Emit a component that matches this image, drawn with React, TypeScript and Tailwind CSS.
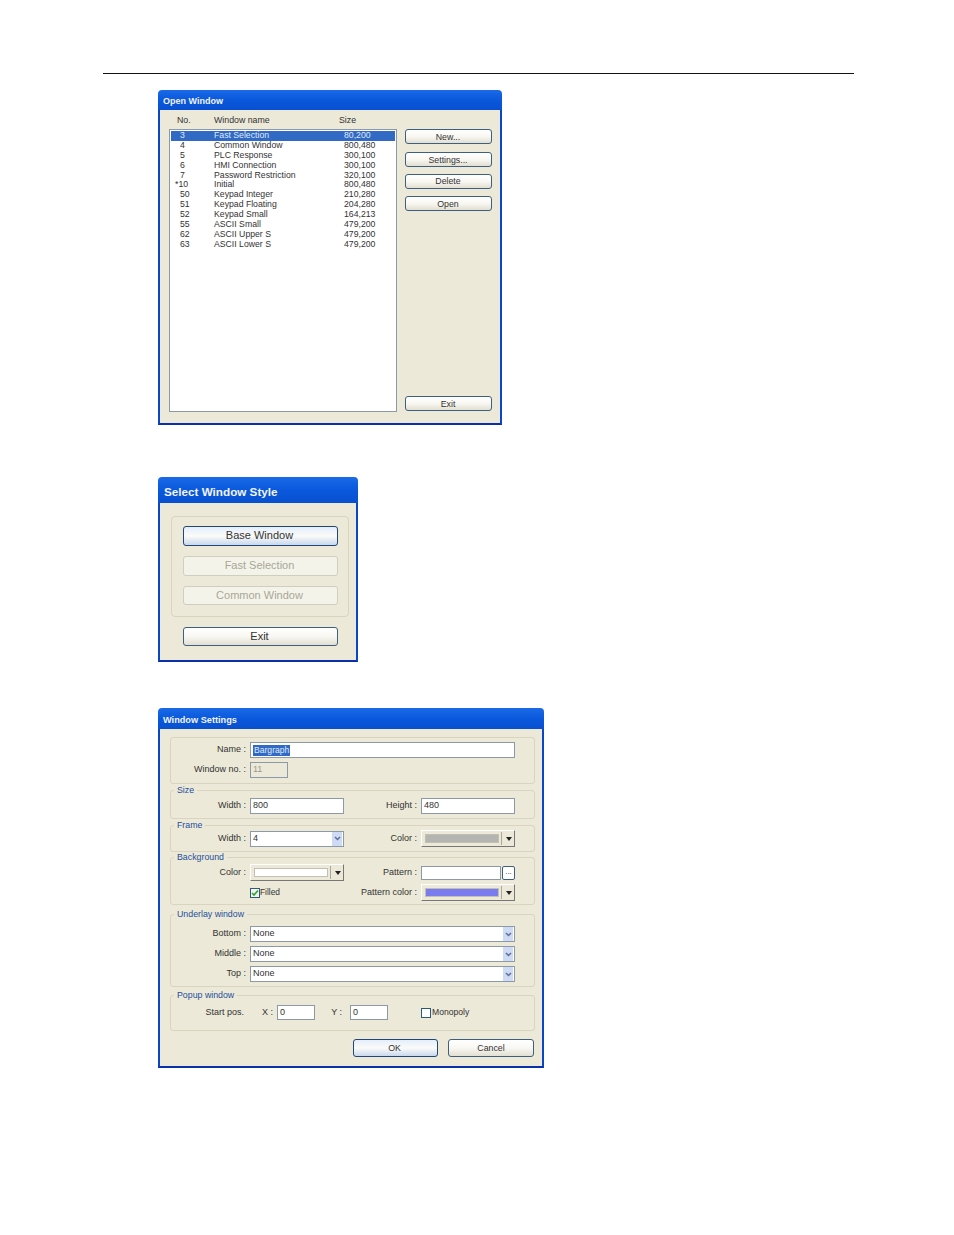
import type { ReactNode } from "react";

const rows = [
  ["3", "Fast Selection", "80,200"],
  ["4", "Common Window", "800,480"],
  ["5", "PLC Response", "300,100"],
  ["6", "HMI Connection", "300,100"],
  ["7", "Password Restriction", "320,100"],
  ["*10", "Initial", "800,480"],
  ["50", "Keypad Integer", "210,280"],
  ["51", "Keypad Floating", "204,280"],
  ["52", "Keypad Small", "164,213"],
  ["55", "ASCII Small", "479,200"],
  ["62", "ASCII Upper S", "479,200"],
  ["63", "ASCII Lower S", "479,200"],
];

function Win({ title, className, barClass, children }: { title: string; className: string; barClass: string; children: ReactNode }) {
  return (
    <div className={`ml-[158px] flex flex-col ${className}`}>
      <div className={`flex items-center rounded-t-[4px] bg-gradient-to-b from-[#1a6ae8] via-[#0a58dc] to-[#0850d0] font-bold text-[#f2f4f8] ${barClass}`}>
        {title}
      </div>
      <div className="min-h-0 flex-1 border-x-2 border-b-2 border-x-[#0a46c8] border-b-[#0a2fa8] bg-[#ece9d8]">{children}</div>
    </div>
  );
}

function Btn({ label, className, kind }: { label: string; className: string; kind?: "default" | "off" }) {
  const look =
    kind === "off"
      ? "border-[#d0cebf] bg-[#f4f3ea] text-[#a8a796]"
      : kind === "default"
        ? "border-[#20467a] bg-gradient-to-b from-[#e4eefb] via-[#fbfbf8] to-[#c9d8ee] text-[#333]"
        : "border-[#3f5f80] bg-gradient-to-b from-white via-[#f8f7f2] to-[#e2dfd2] text-[#333]";
  return <div className={`flex items-center justify-center rounded-[3px] border ${look} ${className}`}>{label}</div>;
}

function Group({ legend, className, children }: { legend?: string; className: string; children: ReactNode }) {
  return (
    <div className={`relative ml-[10px] mr-[7px] rounded-[3px] border border-[#d9d4bf] pl-[3px] ${className}`}>
      {legend && <span className="absolute left-[3px] top-[-6px] bg-[#ece9d8] px-[3px] text-[8.8px] leading-[11px] text-[#1d4f9c]">{legend}</span>}
      {children}
    </div>
  );
}

function Label({ text, className = "w-[76px]" }: { text: string; className?: string }) {
  return <span className={`shrink-0 pr-[4px] text-right text-[9px] text-[#333] ${className}`}>{text}</span>;
}

function Field({ value, className, disabled, children }: { value?: string; className: string; disabled?: boolean; children?: ReactNode }) {
  return (
    <div
      className={`flex items-center border border-[#8c9aa8] pl-[2px] text-[9px] ${disabled ? "bg-[#ece9d8] text-[#9a9a8c]" : "bg-white text-[#333]"} ${className}`}
    >
      {value}
      {children}
    </div>
  );
}

function Combo({ value, className }: { value: string; className: string }) {
  return (
    <div className={`flex h-[16px] items-center justify-between border border-[#8c9aa8] bg-white pl-[2px] text-[9px] text-[#333] ${className}`}>
      {value}
      <span className="mr-[1px] flex h-[14px] w-[10px] items-center justify-center bg-[#cfdaf4]">
        <svg width="7" height="5" viewBox="0 0 7 5" fill="none" stroke="#5c6f94" strokeWidth="1.5">
          <path d="M1 1l2.5 2.5L6 1" />
        </svg>
      </span>
    </div>
  );
}

function ColorBtn({ swatch, className }: { swatch: string; className: string }) {
  return (
    <div className={`flex h-[17px] items-center border border-b-[#777] border-l-white border-r-[#777] border-t-white bg-[#ece9d8] pl-[3px] ${className}`}>
      <span className={`h-[9px] flex-1 border border-[#c0c0b4] ${swatch}`} />
      <span className="mx-[2px] h-[13px] w-[1px] bg-[#aca899]" />
      <span className="mx-[2px] h-0 w-0 border-x-[3px] border-t-[4px] border-x-transparent border-t-[#222]" />
    </div>
  );
}

function Row({ className, children }: { className?: string; children: ReactNode }) {
  return <div className={`flex items-center ${className ?? ""}`}>{children}</div>;
}

export default function App() {
  return (
    <div className="h-[1235px] w-[954px] overflow-hidden bg-white pt-[73px] font-['Liberation_Sans',sans-serif]">
      <div className="ml-[103px] h-px w-[751px] bg-[#111]" />

      <Win title="Open Window" className="mt-[16px] h-[335px] w-[344px]" barClass="h-[20px] pl-[5px] pt-[3px] text-[9px]">
        <div className="flex h-[19px] items-center pt-[2px] text-[8.8px] text-[#333]">
          <span className="ml-[17px] w-[37px]">No.</span>
          <span className="w-[125px]">Window name</span>
          <span>Size</span>
        </div>
        <div className="flex pl-[9px]">
          <div className="h-[283px] w-[228px] border border-[#8c9aa8] bg-white p-px text-[8.7px] leading-[9.9px] text-[#333]">
            {rows.map(([no, name, size], i) => (
              <div key={no} className={`flex h-[9.9px] items-center ${i === 0 ? "bg-[#316ac5] text-[#dfe8f6]" : ""}`}>
                <span className={`w-[43px] ${no.startsWith("*") ? "pl-[4px]" : "pl-[9px]"}`}>{no}</span>
                <span className="w-[130px]">{name}</span>
                <span>{size}</span>
              </div>
            ))}
          </div>
          <div className="ml-[8px] flex h-[282px] w-[87px] flex-col text-[8.8px]">
            <Btn label="New..." className="h-[15px] pr-px pt-[2px]" />
            <Btn label="Settings..." className="mt-[8px] h-[15px] pr-px pt-[2px]" />
            <Btn label="Delete" className="mt-[7px] h-[15px] pr-px" />
            <Btn label="Open" className="mt-[7px] h-[15px] pr-px pt-[2px]" />
            <Btn label="Exit" className="mt-auto h-[15px] pr-px pt-[2px]" />
          </div>
        </div>
      </Win>

      <Win title="Select Window Style" className="mt-[52px] h-[185px] w-[200px]" barClass="h-[26px] pl-[6px] pt-[4px] text-[11.7px]">
        <div className="ml-[11px] mr-[12px] mt-[13px] flex h-[101px] w-[178px] flex-col gap-[10px] rounded-[4px] border border-[#d9d4bf] pl-[11px] pr-[10px] pt-[9px] text-[11px]">
          <Btn label="Base Window" kind="default" className="h-[20px] pb-[2px] pr-[2px]" />
          <Btn label="Fast Selection" kind="off" className="h-[20px] pb-[2px] pr-[2px]" />
          <Btn label="Common Window" kind="off" className="h-[19px] pr-[2px]" />
        </div>
        <Btn label="Exit" className="ml-[23px] mt-[10px] h-[19px] w-[155px] pr-[2px] text-[11px]" />
      </Win>

      <Win title="Window Settings" className="mt-[46px] h-[360px] w-[386px]" barClass="h-[21px] pl-[5px] pt-[4px] text-[9.2px]">
        <Group className="mt-[8px] h-[47px] pt-[4px]">
          <Row>
            <Label text="Name :" />
            <Field className="h-[16px] w-[265px]">
              <span className="bg-[#316ac5] px-px text-[8.6px] leading-[11px] text-[#dfe8f6]">Bargraph</span>
            </Field>
          </Row>
          <Row className="mt-[4px]">
            <Label text="Window no. :" />
            <Field value="11" disabled className="h-[16px] w-[38px]" />
          </Row>
        </Group>
        <Group legend="Size" className="mt-[6px] h-[29px] pt-[6px]">
          <Row className="pt-px">
            <Label text="Width :" />
            <Field value="800" className="h-[16px] w-[94px]" />
            <Label text="Height :" className="w-[77px]" />
            <Field value="480" className="h-[16px] w-[94px]" />
          </Row>
        </Group>
        <Group legend="Frame" className="mt-[6px] h-[27px] pt-[4px]">
          <Row>
            <Label text="Width :" />
            <Combo value="4" className="w-[94px]" />
            <Label text="Color :" className="w-[77px]" />
            <ColorBtn swatch="bg-[#b4b4b0]" className="w-[94px]" />
          </Row>
        </Group>
        <Group legend="Background" className="mt-[5px] h-[48px] pt-[6px]">
          <Row>
            <Label text="Color :" />
            <ColorBtn swatch="bg-white" className="w-[94px]" />
            <Label text="Pattern :" className="w-[77px]" />
            <Field className="h-[14px] w-[80px]" />
            <div className="ml-[1px] flex h-[14px] w-[13px] items-start justify-center rounded-[2px] border border-[#3f5f80] bg-white text-[8px] leading-[9px] text-[#333]">...</div>
          </Row>
          <Row className="mt-[3px]">
            <span className="w-[76px] shrink-0" />
            <span className="flex h-[10px] w-[10px] items-center justify-center border border-[#2c5a7a] bg-[#f4f4ee]">
              <svg width="8" height="8" viewBox="0 0 8 8" fill="none" stroke="#2fa52f" strokeWidth="1.6">
                <path d="M1 4l2 2 4-4.5" />
              </svg>
            </span>
            <span className="w-[84px] text-[8.4px] text-[#333]">Filled</span>
            <Label text="Pattern color :" className="w-[77px]" />
            <ColorBtn swatch="bg-[#7b7bf0]" className="w-[94px]" />
          </Row>
        </Group>
        <Group legend="Underlay window" className="mt-[9px] flex h-[73px] flex-col gap-[4px] pt-[11px]">
          <Row>
            <Label text="Bottom :" />
            <Combo value="None" className="w-[265px]" />
          </Row>
          <Row>
            <Label text="Middle :" />
            <Combo value="None" className="w-[265px]" />
          </Row>
          <Row>
            <Label text="Top :" />
            <Combo value="None" className="w-[265px]" />
          </Row>
        </Group>
        <Group legend="Popup window" className="mt-[8px] h-[36px] pt-[9px]">
          <Row>
            <Label text="Start pos." className="w-[74px]" />
            <Label text="X :" className="w-[29px]" />
            <Field value="0" className="h-[15px] w-[38px]" />
            <Label text="Y :" className="w-[31px]" />
            <Field value="0" className="ml-[4px] h-[15px] w-[38px]" />
            <span className="ml-[33px] h-[10px] w-[10px] border border-[#2c5a7a] bg-white" />
            <span className="ml-px text-[8.6px] text-[#333]">Monopoly</span>
          </Row>
        </Group>
        <div className="mt-[8px] flex justify-end gap-[10px] pr-[8px] text-[8.8px]">
          <Btn label="OK" kind="default" className="h-[18px] w-[85px] pr-[2px] pt-px" />
          <Btn label="Cancel" className="h-[18px] w-[86px] pt-px" />
        </div>
      </Win>
    </div>
  );
}
